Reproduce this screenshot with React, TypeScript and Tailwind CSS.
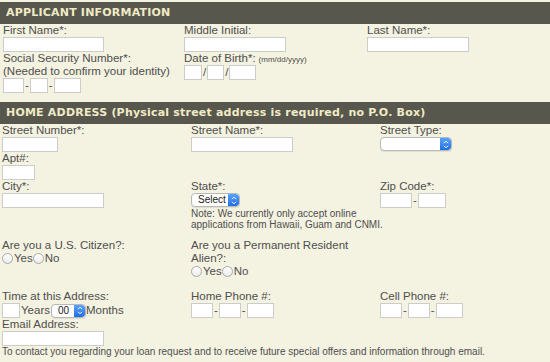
import React from "react";

const Label = ({ children }: { children: React.ReactNode }) => (
  <div className="h-[13px] text-[11.5px] leading-[13px] text-[#4f4f4f] whitespace-nowrap">
    {children}
  </div>
);

const Box = ({ w }: { w: string }) => (
  <input
    type="text"
    className={`${w} block h-[15px] border border-[#cccccc] bg-white outline-none`}
  />
);

const Sep = ({ c }: { c: string }) => (
  <span className="px-[1px] text-[11.5px] leading-[15px] text-[#4f4f4f]">{c}</span>
);

const Arrows = () => (
  <span className="flex h-full w-[11px] items-center justify-center rounded-r-[3px] bg-gradient-to-b from-[#5aa2f8] to-[#1f6fe6]">
    <svg width="6" height="9" viewBox="0 0 6 9" fill="none">
      <path d="M1 3.2 3 1.2 5 3.2M1 5.8 3 7.8 5 5.8" stroke="white" strokeWidth="1" />
    </svg>
  </span>
);

const Dropdown = ({ w, text }: { w: string; text?: string }) => (
  <div
    className={`${w} flex h-[14px] items-center justify-between overflow-hidden rounded-[4px] border border-[#b8b8b8] bg-white shadow-[0_1px_1px_rgba(0,0,0,0.08)]`}
  >
    <span className="pl-[6px] text-[10px] leading-[12px] text-[#222]">{text}</span>
    <Arrows />
  </div>
);

const Radio = () => (
  <span className="inline-block h-[11px] w-[11px] rounded-full border border-[#a9a9a9] bg-gradient-to-b from-white to-[#ececec]" />
);

const Radios = () => (
  <div className="flex h-[13px] items-center text-[11.5px] leading-[13px] text-[#4f4f4f]">
    <Radio />
    <span className="ml-[1px]">Yes</span>
    <Radio />
    <span className="ml-[1px]">No</span>
  </div>
);

const Header = ({ children }: { children: React.ReactNode }) => (
  <div className="flex h-[22px] items-center bg-[#58574d] bg-[radial-gradient(#4a4941_0.6px,transparent_0.7px)] bg-[length:2px_2px] pl-[6px] font-['DejaVu_Sans',sans-serif] text-[11px] font-bold tracking-[0.2px] text-[#f0ebc6]">
    {children}
  </div>
);

export default function App() {
  return (
    <div className="h-[362px] w-[550px] overflow-hidden bg-[#f4f2e0] pt-[2px] font-['Liberation_Sans',Arial,sans-serif]">
      <Header>APPLICANT INFORMATION</Header>

      <div className="pl-[3px]">
        <div className="flex">
          <div className="w-[181px]">
            <Label>First Name*:</Label>
            <Box w="w-[101px]" />
          </div>
          <div className="w-[183px]">
            <Label>Middle Initial:</Label>
            <Box w="w-[102px]" />
          </div>
          <div>
            <Label>Last Name*:</Label>
            <Box w="w-[102px]" />
          </div>
        </div>

        <div className="flex">
          <div className="w-[181px]">
            <Label>Social Security Number*:</Label>
            <Label>(Needed to confirm your identity)</Label>
            <div className="flex">
              <Box w="w-[21px]" />
              <Sep c="-" />
              <Box w="w-[18px]" />
              <Sep c="-" />
              <Box w="w-[27px]" />
            </div>
          </div>
          <div>
            <div className="flex h-[13px] items-baseline text-[11.5px] leading-[13px] text-[#4f4f4f]">
              Date of Birth*:
              <span className="ml-[3px] text-[8px]">(mm/dd/yyyy)</span>
            </div>
            <div className="flex">
              <Box w="w-[18px]" />
              <Sep c="/" />
              <Box w="w-[17px]" />
              <Sep c="/" />
              <Box w="w-[27px]" />
            </div>
          </div>
        </div>
      </div>

      <div className="mt-[9px]">
        <Header>HOME ADDRESS (Physical street address is required, no P.O. Box)</Header>
      </div>

      <div className="pl-[2px]">
        <div className="flex">
          <div className="w-[189px]">
            <Label>Street Number*:</Label>
            <Box w="w-[56px]" />
            <Label>Apt#:</Label>
            <Box w="w-[33px]" />
          </div>
          <div className="w-[189px]">
            <Label>Street Name*:</Label>
            <Box w="w-[102px]" />
          </div>
          <div>
            <Label>Street Type:</Label>
            <Dropdown w="w-[72px]" />
          </div>
        </div>

        <div className="flex">
          <div className="w-[189px]">
            <Label>City*:</Label>
            <Box w="w-[102px]" />
          </div>
          <div className="w-[189px]">
            <Label>State*:</Label>
            <Dropdown w="w-[49px]" text="Select" />
            <div className="mt-[1px] whitespace-nowrap text-[10px] leading-[11px] text-[#4f4f4f]">
              Note: We currently only accept online
              <br />
              applications from Hawaii, Guam and CNMI.
            </div>
          </div>
          <div>
            <Label>Zip Code*:</Label>
            <div className="flex">
              <Box w="w-[32px]" />
              <Sep c="-" />
              <Box w="w-[28px]" />
            </div>
          </div>
        </div>

        <div className="mt-[9px] flex">
          <div className="w-[189px]">
            <Label>Are you a U.S. Citizen?:</Label>
            <Radios />
          </div>
          <div>
            <Label>Are you a Permanent Resident</Label>
            <Label>Alien?:</Label>
            <Radios />
          </div>
        </div>

        <div className="mt-[12px] flex">
          <div className="w-[189px]">
            <Label>Time at this Address:</Label>
            <div className="flex items-center text-[11.5px] leading-[15px] text-[#4f4f4f]">
              <Box w="w-[18px]" />
              <span className="ml-[1px]">Years</span>
              <span className="ml-[1px]">
                <Dropdown w="w-[35px]" text="00" />
              </span>
              <span>Months</span>
            </div>
            <Label>Email Address:</Label>
            <Box w="w-[102px]" />
          </div>
          <div className="w-[189px]">
            <Label>Home Phone #:</Label>
            <div className="flex">
              <Box w="w-[22px]" />
              <Sep c="-" />
              <Box w="w-[22px]" />
              <Sep c="-" />
              <Box w="w-[27px]" />
            </div>
          </div>
          <div>
            <Label>Cell Phone #:</Label>
            <div className="flex">
              <Box w="w-[22px]" />
              <Sep c="-" />
              <Box w="w-[22px]" />
              <Sep c="-" />
              <Box w="w-[27px]" />
            </div>
          </div>
        </div>

        <div className="text-[10px] leading-[11px] text-[#4f4f4f] whitespace-nowrap">
          To contact you regarding your loan request and to receive future special offers and
          information through email.
        </div>
      </div>
    </div>
  );
}
